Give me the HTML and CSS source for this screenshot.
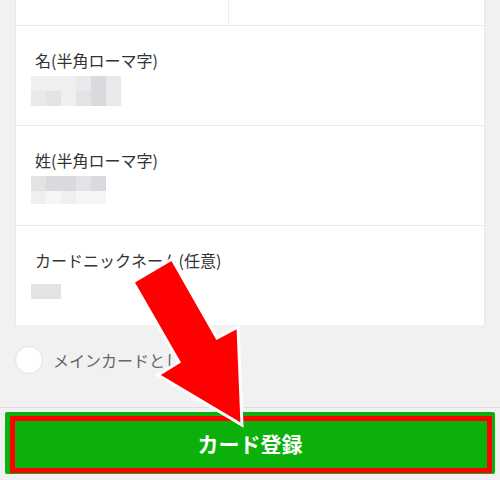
FILE: index.html
```html
<!DOCTYPE html>
<html lang="ja">
<head>
<meta charset="utf-8">
<title>カード登録</title>
<link rel="stylesheet" href="styles.css">
</head>
<body>
<div class="page">
  <div class="card">
    <div class="row-top">
      <div class="cell cell-left"></div>
      <div class="cell"></div>
    </div>
    <div class="row">
      <div class="label">名(半角ローマ字)</div>
      <div class="mosaic">
        <div class="mrow">
          <span class="c c1"></span><span class="c c1"></span><span class="c c1"></span><span class="c c2"></span><span class="c c4"></span><span class="c c2"></span>
        </div>
        <div class="mrow">
          <span class="c c2"></span><span class="c c3"></span><span class="c c1"></span><span class="c c3"></span><span class="c c4"></span><span class="c c2"></span>
        </div>
      </div>
    </div>
    <div class="row">
      <div class="label">姓(半角ローマ字)</div>
      <div class="mosaic">
        <div class="mrow">
          <span class="c c3"></span><span class="c c4"></span><span class="c c4"></span><span class="c c3"></span><span class="c c4"></span>
        </div>
        <div class="mrow short">
          <span class="c c1"></span><span class="c c0"></span><span class="c c1"></span><span class="c c0"></span><span class="c c0"></span>
        </div>
      </div>
    </div>
    <div class="row">
      <div class="label">カードニックネーム(任意)</div>
      <div class="mosaic mosaic-low">
        <div class="mrow">
          <span class="c c3"></span><span class="c c3"></span>
        </div>
      </div>
    </div>
  </div>

  <div class="option">
    <span class="radio"></span>
    <span class="option-text">メインカードとして設定</span>
  </div>

  <div class="footer">
    <div class="button">カード登録</div>
  </div>
</div>

<div class="mark"></div>
<svg class="arrow" width="500" height="480" viewBox="0 0 500 480" xmlns="http://www.w3.org/2000/svg">
  <polygon points="172,259 217,338 238,327 242,425 158,375 179,362 133,282" fill="#ff0000" stroke="#ffffff" stroke-width="3" stroke-linejoin="miter"/>
</svg>
</body>
</html>
```

FILE: styles.css
```css
html, body {
  margin: 0;
  padding: 0;
}
body {
  background: #f1f1f1;
  font-family: "Noto Sans CJK JP", "Noto Sans", sans-serif;
  width: 500px;
  height: 480px;
  overflow: hidden;
  position: relative;
}
.page {
  display: flex;
  flex-direction: column;
}
.card {
  margin: 0 15px;
  background: #ffffff;
  border-left: 1px solid #e8e8e8;
  border-right: 1px solid #e8e8e8;
}
.row-top {
  display: flex;
  height: 25px;
}
.cell {
  flex: 1;
}
.cell-left {
  flex: 0 0 212px;
  border-right: 1px solid #ececec;
}
.row {
  height: 99px;
  border-top: 1px solid #e9e9e9;
  padding: 0 15px;
  box-sizing: content-box;
}
.label {
  margin-top: 22px;
  padding-left: 4px;
  font-size: 16px;
  line-height: 24px;
  color: #333333;
}
.mosaic {
  margin-top: 4px;
  display: flex;
  flex-direction: column;
}
.mosaic-low {
  margin-top: 12px;
}
.mrow {
  display: flex;
  height: 15px;
}
.mrow.short {
  height: 13px;
}
.c {
  width: 15px;
  height: 100%;
}
.c0 { background: #f6f6f7; }
.c1 { background: #efeff0; }
.c2 { background: #e9e9eb; }
.c3 { background: #e3e3e6; }
.c4 { background: #dadade; }

.option {
  display: flex;
  align-items: flex-start;
  height: 83px;
  padding-left: 15px;
  padding-top: 21px;
  box-sizing: border-box;
  gap: 10px;
  border-bottom: 1px solid #dedede;
}
.radio {
  width: 26px;
  height: 26px;
  border-radius: 50%;
  background: #ffffff;
  border: 1px solid #e2e2e2;
}
.option-text {
  font-size: 16px;
  line-height: 28px;
  color: #666666;
}
.footer {
  padding: 4px 5px 0;
}
.button {
  height: 62px;
  background: #0bb00b;
  border-radius: 2px;
  color: #ffffff;
  font-size: 21px;
  font-weight: bold;
  display: flex;
  align-items: center;
  justify-content: center;
}
.mark {
  position: absolute;
  left: 10px;
  top: 416px;
  width: 472px;
  height: 47px;
  border: 5px solid #ff0000;
}
.arrow {
  position: absolute;
  left: 0;
  top: 0;
}
```
